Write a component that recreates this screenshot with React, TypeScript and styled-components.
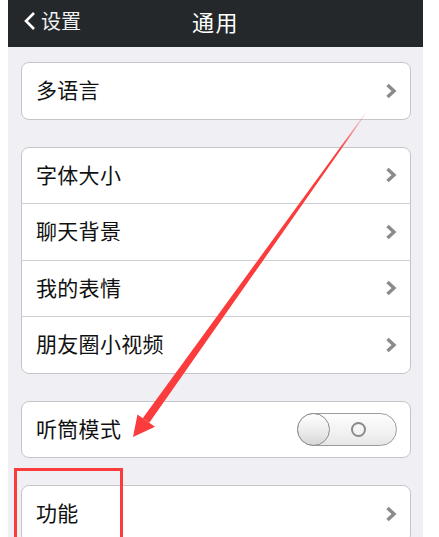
import React from 'react';
import styled, { createGlobalStyle } from 'styled-components';

const GlobalStyle = createGlobalStyle`
  html, body {
    margin: 0;
    padding: 0;
    background: #ffffff;
    overflow: hidden;
  }
  body {
    font-family: "Noto Sans CJK SC", "Noto Sans", sans-serif;
  }
`;

const Page = styled.div`
  position: relative;
  width: 439px;
  height: 537px;
  overflow: hidden;
  padding-left: 8px;
  box-sizing: border-box;
  background: #ffffff;
`;

const Screen = styled.div`
  width: 415px;
  height: 100%;
  background: #efeff4;
  display: flex;
  flex-direction: column;
`;

const NavBar = styled.div`
  height: 47px;
  flex-shrink: 0;
  background: #24282a;
  position: relative;
  display: flex;
  align-items: center;
  justify-content: center;
  padding-bottom: 6px;
  box-sizing: border-box;
  color: #ffffff;
`;

const BackButton = styled.div`
  position: absolute;
  left: 15px;
  top: 0;
  bottom: 6px;
  display: flex;
  align-items: center;
  gap: 4px;
  font-size: 20px;
  color: #f2f2f2;
`;

const Title = styled.div`
  font-size: 22px;
  letter-spacing: 1.5px;
`;

const Content = styled.div`
  padding: 15px 12px 0 13px;
  display: flex;
  flex-direction: column;
  gap: 27px;
`;

const Card = styled.div`
  background: #ffffff;
  border: 1px solid #c6c6ca;
  border-radius: 8px;
  overflow: hidden;
`;

const Row = styled.div`
  height: 55.5px;
  display: flex;
  align-items: center;
  justify-content: space-between;
  padding: 0 13px 0 14px;
  & + & {
    border-top: 1px solid #cfcfd3;
  }
`;

const Label = styled.span`
  font-size: 21px;
  line-height: 1;
  color: #111111;
  letter-spacing: 0.3px;
  margin-bottom: 2px;
`;

const Toggle = styled.div`
  position: relative;
  width: 100px;
  height: 33px;
  box-sizing: border-box;
  border: 1px solid #9c9c9c;
  border-radius: 17px;
  background: linear-gradient(#fdfdfd, #f2f2f2 60%, #e6e6e6);
  display: flex;
  align-items: center;
  justify-content: flex-end;
  padding-right: 30px;
`;

const Knob = styled.div`
  position: absolute;
  left: -1px;
  top: -1px;
  width: 33px;
  height: 33px;
  box-sizing: border-box;
  border-radius: 50%;
  border: 1px solid #8c8c8c;
  background: linear-gradient(#ffffff, #ececec 55%, #d6d6d6);
`;

const OffRing = styled.div`
  width: 15px;
  height: 15px;
  box-sizing: border-box;
  border-radius: 50%;
  border: 2.5px solid #8a8a8a;
`;

const Highlight = styled.div`
  position: absolute;
  left: 14px;
  top: 468px;
  width: 109px;
  height: 100px;
  box-sizing: border-box;
  border: 3px solid #fa3c3c;
`;

const ArrowLayer = styled.svg`
  position: absolute;
  left: 0;
  top: 0;
  pointer-events: none;
`;

const Chevron = () => (
  <svg width="12" height="16" viewBox="0 0 12 16">
    <path d="M2.5 2 L9 8 L2.5 14" fill="none" stroke="#8b8b8b" strokeWidth="3.4" />
  </svg>
);

const BackChevron = () => (
  <svg width="14" height="20" viewBox="0 0 14 20">
    <path d="M11 2 L3 10 L11 18" fill="none" stroke="#ffffff" strokeWidth="2.6" />
  </svg>
);

const groups: { label: string; toggle?: boolean }[][] = [
  [{ label: '多语言' }],
  [{ label: '字体大小' }, { label: '聊天背景' }, { label: '我的表情' }, { label: '朋友圈小视频' }],
  [{ label: '听筒模式', toggle: true }],
  [{ label: '功能' }],
];

export default function App() {
  return (
    <>
      <GlobalStyle />
      <Page>
        <Screen>
          <NavBar>
            <BackButton>
              <BackChevron />
              设置
            </BackButton>
            <Title>通用</Title>
          </NavBar>
          <Content>
            {groups.map((rows, i) => (
              <Card key={i}>
                {rows.map((r) => (
                  <Row key={r.label}>
                    <Label>{r.label}</Label>
                    {r.toggle ? (
                      <Toggle>
                        <Knob />
                        <OffRing />
                      </Toggle>
                    ) : (
                      <Chevron />
                    )}
                  </Row>
                ))}
              </Card>
            ))}
          </Content>
        </Screen>
        <ArrowLayer width="439" height="537" viewBox="0 0 439 537">
          <defs>
            <linearGradient id="fade" x1="368" y1="110" x2="133" y2="437" gradientUnits="userSpaceOnUse">
              <stop offset="0" stopColor="#fa3c3c" stopOpacity="0" />
              <stop offset="0.12" stopColor="#fa3c3c" stopOpacity="1" />
              <stop offset="1" stopColor="#fa3c3c" stopOpacity="1" />
            </linearGradient>
          </defs>
          <polygon points="368.4,110.3 367.6,109.7 142.7,418.2 149.3,422.8" fill="url(#fade)" />
          <polygon points="133,437 137.5,414.4 155,426.8" fill="#fa3c3c" />
        </ArrowLayer>
        <Highlight />
      </Page>
    </>
  );
}
